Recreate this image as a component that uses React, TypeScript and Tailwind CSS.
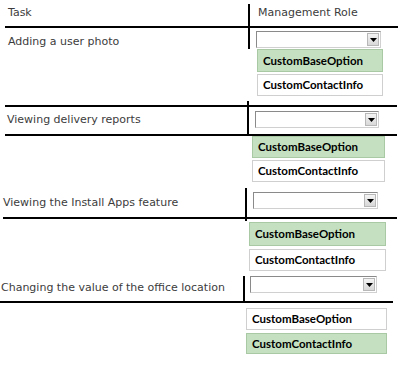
const taskFont = "font-['DejaVu_Sans',Verdana,sans-serif] text-[11px] text-[#3c3c3c]";
const optFont = "font-['Lato','Open_Sans',sans-serif] font-bold text-[11.5px] text-black";

const Dropdown = ({ w }: { w: number }) => (
	<div
		className="flex h-[17px] border border-[#8a8a8a] border-r-[#d0d0d0] border-b-[#d0d0d0] bg-white"
		style={{ width: w }}
	>
		<div className="flex-1" />
		<div className="w-[12px] my-[1px] mr-[1px] flex items-center justify-center bg-gradient-to-b from-[#f4f4f4] to-[#d8d8d8] border border-[#b8b8b8]">
			<svg width="7" height="4" viewBox="0 0 7 4">
				<path d="M0 0h7L3.5 4z" fill="#000" />
			</svg>
		</div>
	</div>
);

type TOpt = { w: number; sel: number; h1: number; h2: number; gap: number };

const Options = ({ w, sel, h1, h2, gap }: TOpt) => (
	<div className="flex flex-col" style={{ width: w, gap }}>
		{["CustomBaseOption", "CustomContactInfo"].map((t, i) => (
			<div
				key={t}
				className={
					(i === sel
						? "bg-[#c4e0c0] border-[#a9c9a4] "
						: "bg-white border-[#cfcfcf] ") +
					"border flex items-center pl-[5px] " +
					optFont
				}
				style={{ height: i === 0 ? h1 : h2 }}
			>
				{t}
			</div>
		))}
	</div>
);

export default function App() {
	return (
		<div className="w-[410px] h-[365px] bg-white overflow-hidden">
			{/* Block 1: header + adding a user photo */}
			<div className="ml-[5px] w-[393px] pt-[4px]">
				<div className="flex h-[24px] border-b-2 border-black">
					<div className={"w-[245px] border-r-2 border-black pl-[3px] pt-[1px] " + taskFont}>
						Task
					</div>
					<div className={"pl-[8px] pt-[1px] " + taskFont}>Management Role</div>
				</div>
				<div className="flex h-[21px]">
					<div className={"w-[245px] border-r-2 border-black pl-[3px] pt-[6px] " + taskFont}>
						Adding a user photo
					</div>
					<div className="pl-[6px] pt-[3px]">
						<Dropdown w={125} />
					</div>
				</div>
				<div className="ml-[252px]">
					<Options w={126} sel={0} h1={23} h2={22} gap={2} />
				</div>
			</div>

			{/* Block 2: viewing delivery reports */}
			<div className="ml-[5px] w-[392px] mt-[5px]">
				<div className="flex h-[4px]">
					<div className="w-[244px] border-r-2 border-black" />
				</div>
				<div className="flex h-[31px] border-y-2 border-black">
					<div className={"w-[244px] border-r-2 border-black pl-[2px] pt-[5px] " + taskFont}>
						Viewing delivery reports
					</div>
					<div className="pl-[6px] pt-[4px]">
						<Dropdown w={124} />
					</div>
				</div>
				<div className="ml-[247px]">
					<Options w={133} sel={0} h1={22} h2={22} gap={2} />
				</div>
			</div>

			{/* Block 3: viewing the install apps feature */}
			<div className="ml-[3px] w-[394px] mt-[6px]">
				<div className="flex h-[31px] border-b-2 border-black">
					<div className={"w-[244px] border-r-2 border-black pt-[7px] " + taskFont}>
						Viewing the Install Apps feature
					</div>
					<div className="pl-[6px] pt-[4px]">
						<Dropdown w={125} />
					</div>
				</div>
				<div className="flex h-[2px]">
					<div className="w-[244px] border-r-2 border-black" />
				</div>
				<div className="ml-[246px] mt-[1px]">
					<Options w={137} sel={0} h1={24} h2={22} gap={3} />
				</div>
			</div>

			{/* Block 4: changing the office location */}
			<div className="w-[393px] mt-[5px]">
				<div className="flex h-[27px] border-b-2 border-black">
					<div className={"w-[245px] border-r-2 border-black pl-[1px] pt-[4px] " + taskFont}>
						Changing the value of the office location
					</div>
					<div className="pl-[5px] pt-[0px]">
						<Dropdown w={127} />
					</div>
				</div>
				<div className="ml-[246px] mt-[5px]">
					<Options w={141} sel={1} h1={22} h2={21} gap={3} />
				</div>
			</div>
		</div>
	);
}
